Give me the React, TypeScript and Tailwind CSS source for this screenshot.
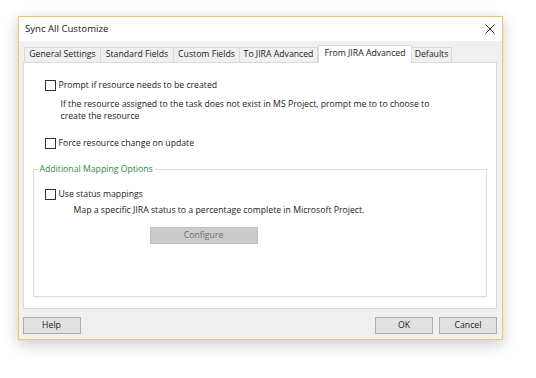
import React from 'react';

const tabs = [
  { label: 'General Settings', w: 'w-[77px]' },
  { label: 'Standard Fields', w: 'w-[74px]' },
  { label: 'Custom Fields', w: 'w-[67px]' },
  { label: 'To JIRA Advanced', w: 'w-[79px]' },
  { label: 'From JIRA Advanced', w: 'w-[94px]', active: true },
  { label: 'Defaults', w: 'w-[41px]' },
];

const Checkbox = () => (
  <span className="block w-[11px] h-[11px] border border-[#333333] bg-white shrink-0" />
);

const DialogButton = ({ label }: { label: string }) => (
  <button className="w-[58px] h-[17px] bg-[#e1e1e1] border border-[#adadad] text-[8.7px] text-[#1a1a1a] leading-none">
    {label}
  </button>
);

export default function App() {
  return (
    <div
      className="w-[536px] h-[378px] bg-white pt-[16px] pl-[18px]"
      style={{ fontFamily: '"Open Sans", "Noto Sans", sans-serif' }}
    >
      <div className="w-[485px] h-[324px] border border-[#f3c46c] bg-[#f0f0f0] shadow-[0_4px_14px_rgba(0,0,0,0.22)] flex flex-col">
        {/* Title bar */}
        <div className="h-[24px] bg-white flex items-center justify-between pl-[6px] pr-[7px] shrink-0">
          <span className="text-[9.6px] text-[#1a1a1a]">Sync All Customize</span>
          <svg width="10" height="10" viewBox="0 0 10 10">
            <path d="M0.5 0.5 L9.5 9.5 M9.5 0.5 L0.5 9.5" stroke="#333" strokeWidth="1" />
          </svg>
        </div>

        {/* Body */}
        <div className="flex flex-col flex-1 pl-[3.5px] pr-[5px] pt-[4px]">
          {/* Tabs */}
          <div className="flex items-end h-[16.5px] pl-[1.5px] relative z-10">
            {tabs.map((t) =>
              t.active ? (
                <div
                  key={t.label}
                  className={`${t.w} h-[17.5px] bg-white border border-b-0 border-[#d9d9d9] text-[8.7px] text-[#1a1a1a] flex items-center justify-center -mb-[1px] leading-none pb-[2px]`}
                >
                  {t.label}
                </div>
              ) : (
                <div
                  key={t.label}
                  className={`${t.w} h-[14.5px] bg-[#f0f0f0] border border-b-0 border-[#d9d9d9] -ml-[1px] first:ml-0 text-[8.7px] text-[#1a1a1a] flex items-center justify-center leading-none`}
                >
                  {t.label}
                </div>
              )
            )}
          </div>

          {/* Panel */}
          <div className="h-[247px] bg-white border border-[#d9d9d9] flex flex-col text-[8.7px] text-[#1a1a1a] leading-none">
            <div className="flex items-center gap-[3px] pl-[21px] mt-[17px]">
              <Checkbox />
              <span>Prompt if resource needs to be created</span>
            </div>
            <div className="pl-[37px] mt-[7.5px] leading-[12.4px]">
              If the resource assigned to the task does not exist in MS Project, prompt me to to choose to
              <br />
              create the resource
            </div>
            <div className="flex items-center gap-[3px] pl-[21px] mt-[15px]">
              <Checkbox />
              <span>Force resource change on update</span>
            </div>

            {/* Group box */}
            <div className="relative mx-[9px] mt-[20px] h-[128px] border border-[#dcdcdc] flex flex-col">
              <span className="absolute -top-[5px] left-[4px] bg-white px-[2px] text-[8.7px] text-[#2e8b3e] leading-none">
                Additional Mapping Options
              </span>
              <div className="flex items-center gap-[3px] pl-[11px] mt-[19px]">
                <Checkbox />
                <span>Use status mappings</span>
              </div>
              <div className="pl-[40px] mt-[6px]">
                Map a specific JIRA status to a percentage complete in Microsoft Project.
              </div>
              <div className="pl-[116px] mt-[12px]">
                <button className="w-[108px] h-[17px] bg-[#cccccc] border border-[#bfbfbf] text-[8.7px] text-[#6d6d6d] leading-none">
                  Configure
                </button>
              </div>
            </div>
          </div>

          {/* Footer buttons */}
          <div className="flex items-center justify-between mt-[8px]">
            <DialogButton label="Help" />
            <div className="flex gap-[6px]">
              <DialogButton label="OK" />
              <DialogButton label="Cancel" />
            </div>
          </div>
        </div>
      </div>
    </div>
  );
}
